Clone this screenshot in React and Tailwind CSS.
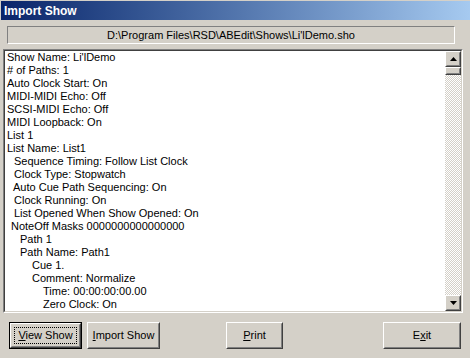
const lines = [
  { t: "Show Name: Li'lDemo", x: 2 },
  { t: "# of Paths: 1", x: 2 },
  { t: "Auto Clock Start: On", x: 2 },
  { t: "MIDI-MIDI Echo: Off", x: 2 },
  { t: "SCSI-MIDI Echo: Off", x: 2 },
  { t: "MIDI Loopback: On", x: 2 },
  { t: "List 1", x: 2 },
  { t: "List Name: List1", x: 2 },
  { t: "Sequence Timing: Follow List Clock", x: 9 },
  { t: "Clock Type: Stopwatch", x: 9 },
  { t: "Auto Cue Path Sequencing: On", x: 8 },
  { t: "Clock Running: On", x: 9 },
  { t: "List Opened When Show Opened: On", x: 9 },
  { t: "NoteOff Masks 0000000000000000", x: 6 },
  { t: "Path 1", x: 15 },
  { t: "Path Name: Path1", x: 15 },
  { t: "Cue 1.", x: 27 },
  { t: "Comment: Normalize", x: 27 },
  { t: "Time: 00:00:00:00.00", x: 38 },
  { t: "Zero Clock: On", x: 38 },
]

function Raised({ children, className = "" }) {
  return (
    <div className={"border border-t-white border-l-white border-r-[#404040] border-b-[#404040] " + className}>
      <div className="w-full h-full border border-t-[#d4d0c8] border-l-[#d4d0c8] border-r-[#808080] border-b-[#808080] flex items-center justify-center">
        {children}
      </div>
    </div>
  )
}

function Arrow({ up }) {
  return (
    <svg width="7" height="4" viewBox="0 0 7 4">
      {up ? <polygon points="3.5,0 7,4 0,4" fill="#000" /> : <polygon points="0,0 7,0 3.5,4" fill="#000" />}
    </svg>
  )
}

function Btn({ children, w, def }) {
  if (def) {
    return (
      <div className={"border border-black h-[27px] " + w}>
        <Raised className="w-full h-full">
          <div className="w-[calc(100%-4px)] h-[calc(100%-4px)] border border-dotted border-black flex items-center justify-center">
            {children}
          </div>
        </Raised>
      </div>
    )
  }
  return <Raised className={"h-[27px] " + w}>{children}</Raised>
}

export default function App() {
  return (
    <div className="w-[470px] h-[358px] bg-[#d4d0c8] overflow-hidden text-black text-[11px]" style={{ fontFamily: "'Liberation Sans', Arial, sans-serif" }}>
      <div className="pt-px pl-px">
        <div className="h-[19px] bg-gradient-to-r from-[#0a246a] to-[#a6caf0] flex items-center pl-[3px] text-white font-bold text-[12px]">
          Import Show
        </div>
      </div>

      <div className="ml-[7px] mt-[6px] w-[448px] h-[18px] border border-t-[#808080] border-l-[#808080] border-r-white border-b-white flex items-center justify-center">
        D:\Program Files\RSD\ABEdit\Shows\Li'lDemo.sho
      </div>

      <div className="ml-[3px] mt-[5px] w-[460px] h-[264px] border border-t-[#808080] border-l-[#808080] border-r-white border-b-white">
        <div className="w-full h-full border border-t-[#404040] border-l-[#404040] border-r-[#d4d0c8] border-b-[#d4d0c8] bg-white flex">
          <div className="flex-1 overflow-hidden">
            {lines.map((l, i) => (
              <div key={i} className="h-[13px] leading-[13px] whitespace-nowrap" style={{ paddingLeft: l.x }}>
                {l.t}
              </div>
            ))}
          </div>
          <div className="w-[16px] flex flex-col bg-[repeating-conic-gradient(#d4d0c8_0_25%,#ffffff_0_50%)] bg-[length:2px_2px]">
            <Raised className="w-[16px] h-[16px] bg-[#d4d0c8]">
              <Arrow up />
            </Raised>
            <Raised className="w-[16px] h-[8px] bg-[#d4d0c8]" />
            <div className="flex-1" />
            <Raised className="w-[16px] h-[16px] bg-[#d4d0c8]">
              <Arrow />
            </Raised>
          </div>
        </div>
      </div>

      <div className="flex mt-[9px] ml-[9px]">
        <Btn w="w-[73px]" def>
          <span><span className="underline">V</span>iew Show</span>
        </Btn>
        <div className="ml-[5px]">
          <Btn w="w-[73px]">
            <span><span className="underline">I</span>mport Show</span>
          </Btn>
        </div>
        <div className="ml-[66px]">
          <Btn w="w-[57px]">
            <span><span className="underline">P</span>rint</span>
          </Btn>
        </div>
        <div className="ml-[100px]">
          <Btn w="w-[78px]">
            <span>E<span className="underline">x</span>it</span>
          </Btn>
        </div>
      </div>
    </div>
  )
}
